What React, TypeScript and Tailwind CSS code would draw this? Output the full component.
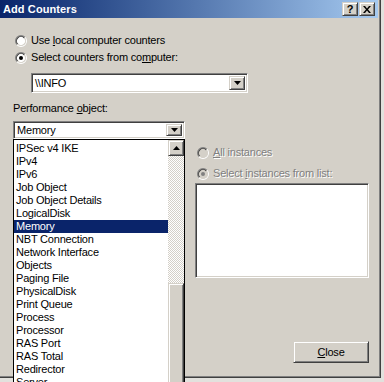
import React from 'react';

const sunken =
  'border border-t-[#808080] border-l-[#808080] border-b-white border-r-white shadow-[inset_1px_1px_0_#404040,inset_-1px_-1px_0_#d4d0c8]';
const raised =
  'border border-t-[#d4d0c8] border-l-[#d4d0c8] border-b-[#404040] border-r-[#404040] shadow-[inset_1px_1px_0_#ffffff,inset_-1px_-1px_0_#808080] bg-[#d4d0c8]';
const disabledText = 'text-[#808080] [text-shadow:1px_1px_0_#ffffff]';

const Radio = ({ checked, disabled }: { checked?: boolean; disabled?: boolean }) => (
  <svg width="12" height="12" viewBox="0 0 12 12" className="shrink-0">
    <circle cx="6" cy="6" r="4.5" fill={disabled ? '#d4d0c8' : '#ffffff'} />
    <circle cx="6" cy="6" r="5.5" fill="none" stroke="#808080" strokeDasharray="17.28 17.28" transform="rotate(135 6 6)" />
    <circle cx="6" cy="6" r="4.5" fill="none" stroke="#404040" strokeDasharray="14.14 14.14" transform="rotate(135 6 6)" />
    <circle cx="6" cy="6" r="5.5" fill="none" stroke="#ffffff" strokeDasharray="17.28 17.28" transform="rotate(-45 6 6)" />
    <circle cx="6" cy="6" r="4.5" fill="none" stroke="#d4d0c8" strokeDasharray="14.14 14.14" transform="rotate(-45 6 6)" />
    {checked && <circle cx="6" cy="6" r="2" fill={disabled ? '#808080' : '#000000'} />}
  </svg>
);

const Arrow = ({ up }: { up?: boolean }) => (
  <svg width="7" height="4" viewBox="0 0 7 4">
    <polygon points={up ? '3.5,0 7,4 0,4' : '0,0 7,0 3.5,4'} fill="#000000" />
  </svg>
);

const DropButton = () => (
  <div className={`${raised} w-[16px] h-full flex items-center justify-center shrink-0`}>
    <Arrow />
  </div>
);

const objects = [
  'IPSec v4 IKE',
  'IPv4',
  'IPv6',
  'Job Object',
  'Job Object Details',
  'LogicalDisk',
  'Memory',
  'NBT Connection',
  'Network Interface',
  'Objects',
  'Paging File',
  'PhysicalDisk',
  'Print Queue',
  'Process',
  'Processor',
  'RAS Port',
  'RAS Total',
  'Redirector',
  'Server',
];

export default function App() {
  return (
    <div className="w-[384px] h-[382px] overflow-hidden bg-[#e2e1dd] font-['Liberation_Sans',Arial,sans-serif] text-[11px] tracking-[-0.2px] text-black leading-[13px]">
      <div className="relative w-[381px] h-[378px] bg-[#d4d0c8] border-r border-b border-r-[#404040] border-b-[#404040] shadow-[inset_-1px_-1px_0_#808080]">
        {/* Title bar */}
        <div className="w-[378px] h-[18px] bg-linear-to-r from-[#0a246a] to-[#a6caf0] flex items-center pl-[3px] pr-[3px]">
          <span className="text-white font-bold tracking-[0.1px] flex-1">Add Counters</span>
          <div className="flex gap-[1px]">
            <div className={`${raised} w-[16px] h-[14px] flex items-center justify-center font-bold text-[11px] leading-none`}>?</div>
            <div className={`${raised} w-[16px] h-[14px] flex items-center justify-center`}>
              <svg width="8" height="7" viewBox="0 0 8 7">
                <path d="M0 0 L2 0 L4 2.5 L6 0 L8 0 L5 3.5 L8 7 L6 7 L4 4.5 L2 7 L0 7 L3 3.5 Z" fill="#000000" />
              </svg>
            </div>
          </div>
        </div>

        {/* Computer selection */}
        <div className="mt-[16px] pl-[15px] flex items-center gap-[4px] h-[13px]">
          <Radio />
          <span>
            Use <u>l</u>ocal computer counters
          </span>
        </div>
        <div className="mt-[4px] pl-[15px] flex items-center gap-[4px] h-[13px]">
          <Radio checked />
          <span>
            Select counters from co<u>m</u>puter:
          </span>
        </div>
        <div className={`${sunken} mt-[9px] ml-[31px] w-[217px] h-[20px] bg-white flex items-center p-[2px]`}>
          <span className="flex-1 pl-[1px]">\\INFO</span>
          <DropButton />
        </div>

        <div className="mt-[9px] ml-[13px] h-[13px]">
          Performance <u>o</u>bject:
        </div>

        <div className="mt-[6px] flex">
          {/* Left column */}
          <div className="ml-[13px] w-[172px]">
            <div className={`${sunken} h-[18px] bg-white flex items-center p-[2px]`}>
              <span className="flex-1 pl-[1px]">Memory</span>
              <DropButton />
            </div>
          </div>

          {/* Right column */}
          <div className="ml-[10px] w-[174px] pt-[25px] flex flex-col">
            <div className="flex items-center gap-[4px] h-[13px] pl-[2px]">
              <Radio disabled />
              <span className={disabledText}>
                <u>A</u>ll instances
              </span>
            </div>
            <div className="mt-[8px] flex items-center gap-[4px] h-[13px] pl-[2px]">
              <Radio checked disabled />
              <span className={disabledText}>
                Select <u>i</u>nstances from list:
              </span>
            </div>
            <div className={`${sunken} mt-[3px] h-[95px] bg-white`} />
            <div className={`${raised} mt-[63px] ml-auto w-[76px] h-[22px] flex items-center justify-center`}>
              <span>
                <u>C</u>lose
              </span>
            </div>
          </div>
        </div>

        {/* Open drop-down list */}
        <div className="absolute left-[13px] top-[139px] w-[172px] h-[250px] bg-white border border-black flex">
          <div className="flex-1 pt-[2px]">
            {objects.map((name) => (
              <div
                key={name}
                className={`h-[13px] pl-[2px] whitespace-nowrap ${
                  name === 'Memory' ? 'bg-[#0a246a] text-white' : ''
                }`}
              >
                {name}
              </div>
            ))}
          </div>
          <div className="w-[16px] flex flex-col">
            <div className={`${raised} h-[16px] flex items-center justify-center shrink-0`}>
              <Arrow up />
            </div>
            <div className="h-[127px] bg-[image:repeating-conic-gradient(#ffffff_0_25%,#d4d0c8_0_50%)] bg-[length:2px_2px]" />
            <div className={`${raised} flex-1`} />
          </div>
        </div>
      </div>
    </div>
  );
}
